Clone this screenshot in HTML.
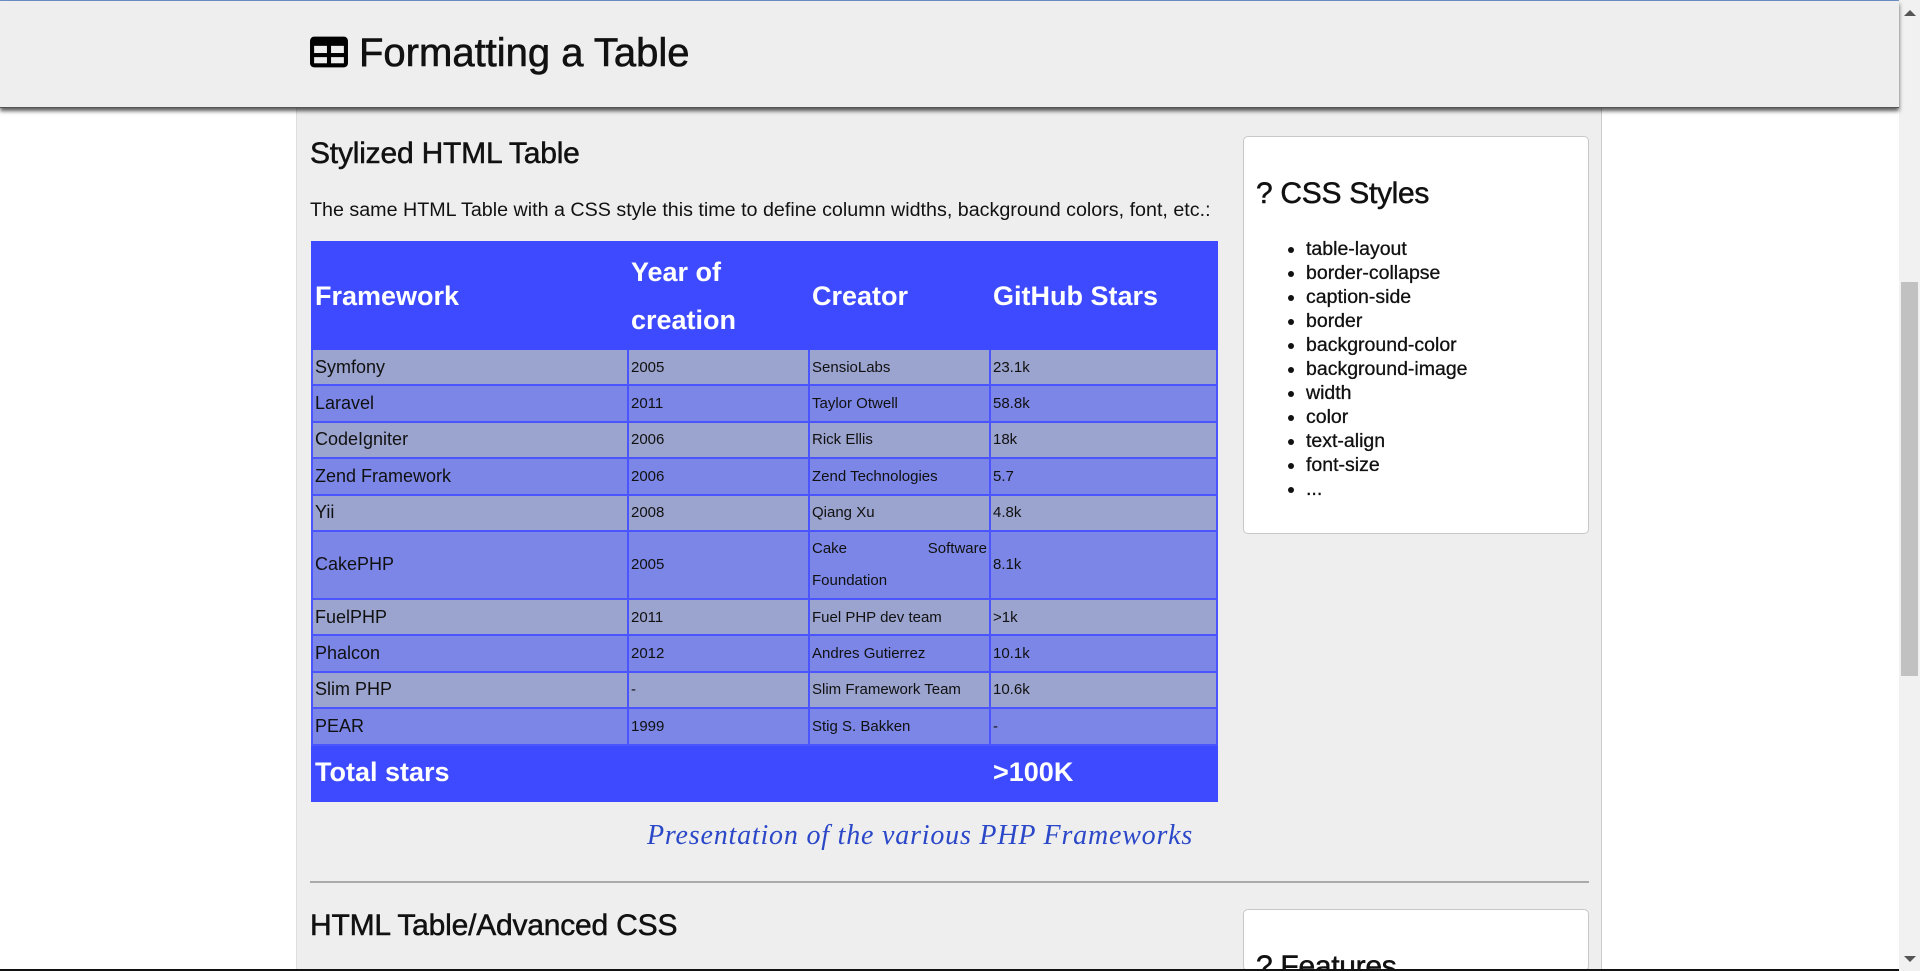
<!DOCTYPE html>
<html><head><meta charset="utf-8"><style>
*{box-sizing:border-box;margin:0;padding:0}
html,body{width:1920px;height:971px;overflow:hidden;background:#fff;font-family:"Liberation Sans",sans-serif;color:#111;position:relative}
.top{position:absolute;left:0;top:0;width:1899px;height:1px;background:#6f8fc8}
.hdr{position:absolute;left:0;top:1px;width:1899px;height:107px;background:#eeeeee;box-shadow:0 3px 4px rgba(0,0,0,.65);z-index:2;border-bottom:1px solid #555}
.hdr h1{position:absolute;left:359px;top:30px;font-size:40px;font-weight:normal;letter-spacing:0px;-webkit-text-stroke:0.6px #111}
.ico{position:absolute;left:309px;top:34px;width:40px;height:34px}
.cont{position:absolute;left:296px;top:108px;width:1306px;height:863px;background:#eeeeee;border-right:1px solid #ccc;border-left:1px solid #ddd}
.sb{position:absolute;left:1899px;top:0;width:21px;height:971px;background:#f1f1f1}
.thumb{position:absolute;left:1901px;top:282px;width:17px;height:394px;background:#c1c1c1}
h2{position:absolute;font-size:30px;font-weight:normal;letter-spacing:-0.2px;-webkit-text-stroke:0.5px #111}
p.d{position:absolute;left:310px;top:199px;font-size:19.7px}
table{position:absolute;left:311px;top:241px;width:907px;border-collapse:collapse;border:2px solid #5a72f2;font-family:"Liberation Sans Narrow","Liberation Sans",sans-serif;table-layout:fixed}
td,th{border:2px solid #4a55ff;text-align:left;padding:0 2px;font-weight:normal;vertical-align:middle;font-size:18px;height:36.4px}
thead th,tfoot td{background:#3d4aff;color:#fff;border-color:#3d4aff;font-size:27px;font-weight:bold}
thead th{height:107px;line-height:48px}
tfoot td{height:56px}
tr.o td{background:#9ba3cf}
tr.e td{background:#7b86e6}
td.y,td.s{font-size:15px}
.cap{position:absolute;left:647px;top:820px;font-family:"Liberation Serif",serif;font-style:italic;color:#2b48c8;font-size:28px;letter-spacing:0.8px}
.hr{position:absolute;left:310px;top:881px;width:1279px;height:2px;background:#aaa}
.box{position:absolute;left:1243px;width:346px;background:#fff;border:1px solid #c8c8c8;border-radius:5px;overflow:hidden}
.box h3{position:absolute;left:12px;top:40px;font-size:30px;font-weight:normal;letter-spacing:-0.3px;-webkit-text-stroke:0.5px #111}
.box ul{position:absolute;left:62px;top:100px;font-size:19.5px;line-height:24px;-webkit-text-stroke:0.3px #111}
.bot{position:absolute;left:0;top:969px;width:1899px;height:2px;background:#111;z-index:3}
</style></head><body>
<div class="top"></div>
<div class="hdr">
<svg class="ico" viewBox="0 0 39 32"><rect x="1" y="1" width="37" height="30" rx="4" fill="#000"/><rect x="5" y="10" width="12.5" height="7" fill="#eee"/><rect x="21.5" y="10" width="12.5" height="7" fill="#eee"/><rect x="5" y="21" width="12.5" height="6" fill="#eee"/><rect x="21.5" y="21" width="12.5" height="6" fill="#eee"/></svg>
<h1>Formatting a Table</h1></div>
<div class="cont"></div>
<h2 style="left:310px;top:137px">Stylized HTML Table</h2>
<p class="d">The same HTML Table with a CSS style this time to define column widths, background colors, font, etc.:</p>
<table>
<colgroup><col style="width:316px"><col style="width:181px"><col style="width:181px"><col></colgroup>
<thead><tr><th>Framework</th><th>Year of<br>creation</th><th>Creator</th><th>GitHub Stars</th></tr></thead>
<tbody>
<tr class="o"><td>Symfony</td><td class="y">2005</td><td class="s">SensioLabs</td><td class="y">23.1k</td></tr>
<tr class="e"><td>Laravel</td><td class="y">2011</td><td class="s">Taylor Otwell</td><td class="y">58.8k</td></tr>
<tr class="o"><td>CodeIgniter</td><td class="y">2006</td><td class="s">Rick Ellis</td><td class="y">18k</td></tr>
<tr class="e"><td>Zend Framework</td><td class="y">2006</td><td class="s">Zend Technologies</td><td class="y">5.7</td></tr>
<tr class="o"><td>Yii</td><td class="y">2008</td><td class="s">Qiang Xu</td><td class="y">4.8k</td></tr>
<tr class="e"><td style="height:68px">CakePHP</td><td class="y">2005</td><td class="s" style="text-align:justify;line-height:32px">Cake Software Foundation</td><td class="y">8.1k</td></tr>
<tr class="o"><td>FuelPHP</td><td class="y">2011</td><td class="s">Fuel PHP dev team</td><td class="y">&gt;1k</td></tr>
<tr class="e"><td>Phalcon</td><td class="y">2012</td><td class="s">Andres Gutierrez</td><td class="y">10.1k</td></tr>
<tr class="o"><td>Slim PHP</td><td class="y">-</td><td class="s">Slim Framework Team</td><td class="y">10.6k</td></tr>
<tr class="e"><td>PEAR</td><td class="y">1999</td><td class="s">Stig S. Bakken</td><td class="y">-</td></tr>
</tbody>
<tfoot><tr><td colspan="3">Total stars</td><td>&gt;100K</td></tr></tfoot>
</table>
<div class="cap">Presentation of the various PHP Frameworks</div>
<div class="hr"></div>
<h2 style="left:310px;top:909px">HTML Table/Advanced CSS</h2>
<div class="box" style="top:909px;height:62px"><h3>? Features</h3></div>
<div class="box" style="top:136px;height:398px"><h3>? CSS Styles</h3>
<ul><li>table-layout</li><li>border-collapse</li><li>caption-side</li><li>border</li><li>background-color</li><li>background-image</li><li>width</li><li>color</li><li>text-align</li><li>font-size</li><li>...</li></ul></div>
<div class="sb"></div><div class="thumb"></div>
<div style="position:absolute;left:1904px;top:10px;width:0;height:0;border-left:6px solid transparent;border-right:6px solid transparent;border-bottom:6px solid #555"></div>
<div style="position:absolute;left:1904px;top:956px;width:0;height:0;border-left:6px solid transparent;border-right:6px solid transparent;border-top:6px solid #555"></div>
<div class="bot"></div>
</body></html>
